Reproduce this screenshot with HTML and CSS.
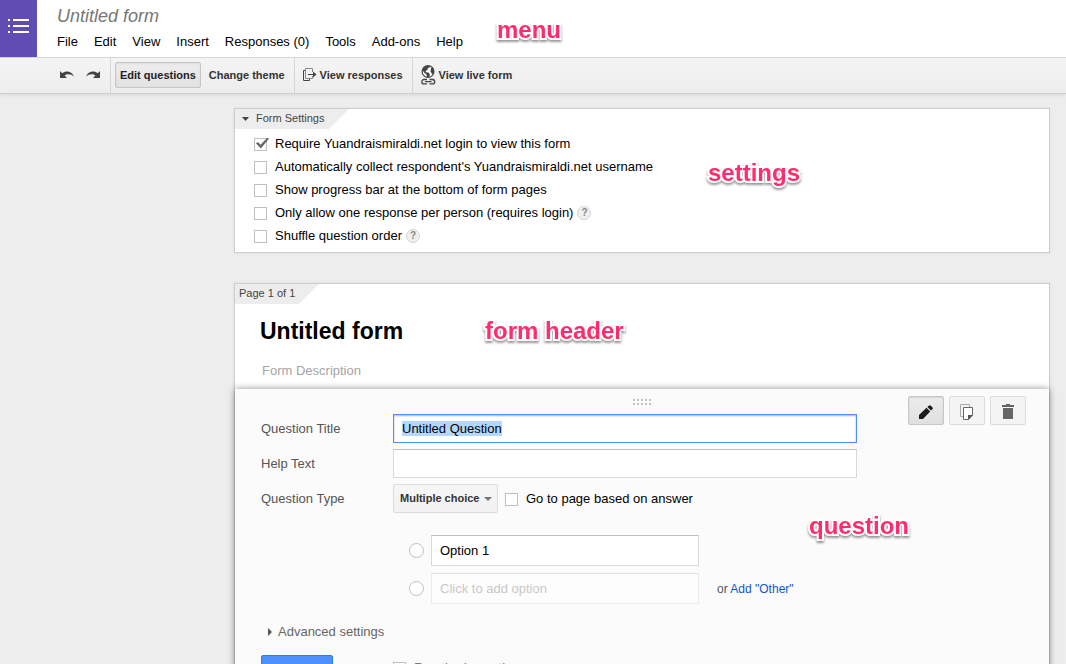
FILE: index.html
```html
<!DOCTYPE html>
<html lang="en">
<head>
<meta charset="utf-8">
<title>Untitled form</title>
<link rel="stylesheet" href="styles.css">
</head>
<body>
<header class="header">
  <a class="logo" href="#" aria-label="Forms home">
    <svg width="21" height="15" viewBox="0 0 21 15" fill="#fff" aria-hidden="true"><path d="M0 0h2v2H0zM5 0h16v2H5zM0 6h2v2H0zM5 6h16v2H5zM0 12h2v2H0zM5 12h16v2H5z"/></svg>
  </a>
  <div class="heading">
    <div class="doc-title">Untitled form</div>
    <nav class="menu">
      <a href="#">File</a><a href="#">Edit</a><a href="#">View</a><a href="#">Insert</a><a href="#">Responses (0)</a><a href="#">Tools</a><a href="#">Add-ons</a><a href="#">Help</a>
    </nav>
  </div>
  <span class="note note-menu">menu</span>
</header>

<div class="toolbar">
  <div class="group history">
    <button class="tool" type="button" aria-label="Undo"><svg width="16" height="10" viewBox="0 0 16 10" fill="#444" aria-hidden="true"><path d="M1 1v7h7L5.600 5.600C8 3.300 12 3.800 15 6.500 13 1.200 7 0 3.200 3.200z"/></svg></button>
    <button class="tool" type="button" aria-label="Redo"><svg width="16" height="10" viewBox="0 0 16 10" fill="#444" aria-hidden="true"><path d="M15 1v7H8l2.400-2.400C8 3.300 4 3.800 1 6.500 3 1.200 9 0 12.800 3.200z"/></svg></button>
  </div>
  <div class="group modes">
    <button class="tool selected" type="button">Edit questions</button>
    <button class="tool" type="button">Change theme</button>
  </div>
  <div class="group">
    <button class="tool" type="button"><svg width="14" height="14" viewBox="0 0 14 14" fill="none" stroke="#444" aria-hidden="true"><path d="M2.500 2.500h-2v10h6v-2"/><path d="M9.500 4V.5h-7v10h7V8" stroke="#888"/><path d="M5 6.500h7"/><path d="M10 3.500 13.500 6.500 10 9.500z" fill="#444" stroke="none"/></svg>View responses</button>
  </div>
  <div class="group">
    <button class="tool" type="button"><svg width="15" height="20" viewBox="0 0 15 20" aria-hidden="true"><circle cx="7" cy="6.500" r="5.900" fill="#fff" stroke="#444" stroke-width="1.200"/><path d="M1.300 5 3 2.200 6 .8l3 .2-.5 1.600-2 .7.3 1.500-2 1-.3 1.500 3 .3 1.500 2-1 2.700L6 12.300 5.500 9.500 3.500 8zM10 3l2-.4 1 3.400-.8 3.500-1.500-1L9.500 6.500z" fill="#444"/><path d="M6 14.500H3a2.200 2.200 0 0 0 0 4.400h3M8.500 14.500h3a2.200 2.200 0 0 1 0 4.400h-3M4 16.700h6.500" fill="none" stroke="#444" stroke-width="1.300"/></svg>View live form</button>
  </div>
</div>

<main class="workspace">
  <section class="card settings">
    <button class="tab" type="button"><svg width="7" height="4" viewBox="0 0 7 4" fill="#444" aria-hidden="true"><path d="M0 0h7L3.500 4z"/></svg>Form Settings</button>
    <div class="checks">
      <div class="check-row"><input class="check" type="checkbox" id="s1" checked><label for="s1">Require Yuandraismiraldi.net login to view this form</label></div>
      <div class="check-row"><input class="check" type="checkbox" id="s2"><label for="s2">Automatically collect respondent's Yuandraismiraldi.net username</label></div>
      <div class="check-row"><input class="check" type="checkbox" id="s3"><label for="s3">Show progress bar at the bottom of form pages</label></div>
      <div class="check-row"><input class="check" type="checkbox" id="s4"><label for="s4">Only allow one response per person (requires login)</label><button class="help" type="button">?</button></div>
      <div class="check-row"><input class="check" type="checkbox" id="s5"><label for="s5">Shuffle question order</label><button class="help" type="button">?</button></div>
    </div>
    <span class="note note-settings">settings</span>
  </section>

  <section class="card page">
    <div class="tab page-tab">Page 1 of 1</div>
    <div class="form-head">
      <h1>Untitled form</h1>
      <input class="description" type="text" placeholder="Form Description" aria-label="Form Description">
    </div>
    <span class="note note-head">form header</span>

    <form class="question">
      <svg class="handle" width="18" height="6" viewBox="0 0 18 6" fill="#c0c0c0" aria-hidden="true"><path d="M0 0h2v2H0zM4 0h2v2H4zM8 0h2v2H8zM12 0h2v2h-2zM16 0h2v2h-2zM0 4h2v2H0zM4 4h2v2H4zM8 4h2v2H8zM12 4h2v2h-2zM16 4h2v2h-2z"/></svg>
      <div class="fields">
        <div class="field"><label for="qt">Question Title</label><input class="text" id="qt" type="text" value="Untitled Question" autofocus></div>
        <div class="field"><label for="ht">Help Text</label><input class="text" id="ht" type="text"></div>
        <div class="field"><label for="ty">Question Type</label>
          <div class="select"><select id="ty"><option>Multiple choice</option></select><svg width="8" height="4" viewBox="0 0 8 4" fill="#777" aria-hidden="true"><path d="M0 0h8L4 4z"/></svg></div>
          <div class="check-row"><input class="check" type="checkbox" id="go"><label for="go">Go to page based on answer</label></div>
        </div>
        <div class="options">
          <div class="option"><input class="radio" type="radio" name="o" aria-label="Option 1 choice"><input class="text" type="text" value="Option 1" aria-label="Option 1 text"></div>
          <div class="option"><input class="radio" type="radio" name="o" aria-label="New choice"><input class="text ghost" type="text" placeholder="Click to add option" aria-label="New option text"><span class="other">or <a href="#">Add "Other"</a></span></div>
        </div>
        <button class="advanced" type="button"><svg width="4" height="8" viewBox="0 0 4 8" fill="#555" aria-hidden="true"><path d="M0 0v8l4-4z"/></svg>Advanced settings</button>
        <div class="finish"><button class="done" type="button" aria-label="Done"></button><div class="check-row"><input class="check" type="checkbox" id="rq"><label for="rq">Required question</label></div></div>
      </div>
      <div class="actions">
        <button class="action selected" type="button" aria-label="Edit"><svg width="14" height="14" viewBox="0 0 14 14" fill="#1c1c1c" aria-hidden="true"><path d="M0 14v-4l7.500-7.200 3.700 3.700L4 14zM8.400 2 9.800.7q1-1 2 0l1.500 1.500q1 1 0 2L12 5.600z"/></svg></button>
        <button class="action" type="button" aria-label="Duplicate"><svg width="14" height="16" viewBox="0 0 14 16" fill="none" aria-hidden="true"><path d="M3 12.500H.5V.5h9V3" stroke="#aaa"/><path d="M3.500 3.500h9v7.500l-4 4.500h-5z" fill="#fff" stroke="#666"/><path d="M8 16v-5h5z" fill="#555"/></svg></button>
        <button class="action" type="button" aria-label="Delete"><svg width="12" height="15" viewBox="0 0 12 15" fill="#666" aria-hidden="true"><path d="M0 1h4V0h4v1h4v2H0zM1 4h10v11H1z"/></svg></button>
      </div>
      <span class="note note-question">question</span>
    </form>
  </section>
</main>
<script src="app.js"></script>
</body>
</html>
```
FILE: styles.css
```css
* { box-sizing: border-box; }
html, body { height: 100%; }
body {
  margin: 0;
  overflow: hidden;
  background: #ededed;
  color: #000;
  font: 13px/16px Arial, "Liberation Sans", sans-serif;
}
button, input, select { font: inherit; color: inherit; margin: 0; }
button { border: 0; background: none; padding: 0; }
a { color: #15c; text-decoration: none; }
svg { display: block; flex: none; }

.header { position: relative; display: flex; background: #fff; }
.logo {
  width: 37px;
  min-height: 57px;
  display: flex;
  align-items: center;
  justify-content: center;
  padding-bottom: 4px;
  background: #5f4db3;
}
.heading { padding: 5px 20px 0; }
.doc-title { font-size: 18px; font-style: italic; line-height: 22px; color: #777; }
.menu { display: flex; gap: 16px; padding-top: 7px; }
.menu a { color: #000; }

.toolbar {
  display: flex;
  height: 37px;
  border-top: 1px solid #d6d6d6;
  border-bottom: 1px solid #cfcfcf;
  background: linear-gradient(#f4f4f4, #ededed);
  box-shadow: 0 1px 3px #00000018;
}
.group { display: flex; align-items: center; padding: 0 9px 2px 8px; }
.group + .group { border-left: 1px solid #d6d6d6; }
.history { gap: 10px; padding-left: 59px; }
.modes { gap: 3px; padding-left: 4px; padding-right: 4px; }
.tool { display: flex; align-items: center; gap: 3px; font-size: 11px; font-weight: bold; color: #333; white-space: nowrap; }
.modes .tool { height: 26px; padding: 0 4px; border: 1px solid transparent; border-radius: 2px; }
.modes .selected {
  border-color: #c6c6c6;
  background: linear-gradient(#ededed, #e2e2e2);
  box-shadow: inset 0 1px 2px #00000014;
  color: #222;
}

.workspace { padding: 14px 16px 0 234px; }
.card { position: relative; background: #fff; border: 1px solid #cdcdcd; box-shadow: 0 0 3px #00000012; }
.card + .card { margin-top: 30px; }
.tab {
  display: flex;
  width: 114px;
  height: 20px;
  align-items: center;
  gap: 7px;
  padding: 0 0 2px 7px;
  font-size: 11px;
  color: #444;
  background: #ededed;
  clip-path: polygon(0 0, 100% 0, calc(100% - 20px) 100%, 0 100%);
}
.tab svg { margin-top: 2px; }
.page-tab { width: 84px; padding-left: 4px; }

.checks { padding: 3px 19px 5px; }
.check-row { display: flex; align-items: center; height: 23px; }
.check {
  appearance: none;
  flex: none;
  width: 13px;
  height: 13px;
  margin: 1px 8px 0 0;
  border: 1px solid #c0c0c0;
  background: #fff;
  position: relative;
}
.check:checked::after {
  content: "";
  position: absolute;
  left: 1px;
  top: -1px;
  width: 13px;
  height: 11px;
  background: #666;
  clip-path: polygon(0 55%, 15% 40%, 35% 65%, 88% 0, 100% 8%, 38% 100%);
}
.help {
  width: 14px;
  height: 14px;
  margin-left: 4px;
  border: 1px solid #d4d4d4;
  border-radius: 50%;
  background: #f0f0f0;
  font-size: 10px;
  font-weight: bold;
  line-height: 12px;
  color: #888;
}

.form-head { padding: 12px 25px 9px; }
h1 { margin: 0; font-size: 23px; line-height: 30px; }
.description { display: block; width: 100%; margin-top: 14px; padding: 0 2px; border: 0; background: none; height: 20px; outline: 0; }
.description::placeholder { color: #a5a5a5; opacity: 1; }

.question {
  position: relative;
  display: flex;
  justify-content: space-between;
  padding: 7px 23px 24px 26px;
  background: #fbfbfb;
  box-shadow: 0 0 7px #00000070;
}
.handle { position: absolute; top: 10px; left: 50%; transform: translateX(-50%); }
.fields { flex: 1; padding-top: 18px; color: #555; }
.field { display: flex; align-items: center; margin-bottom: 6px; }
.field > label { width: 132px; flex: none; }
.field .check-row { margin-left: 7px; color: #000; }
.text {
  flex: 1;
  max-width: 464px;
  height: 29px;
  padding: 0 8px;
  border: 1px solid #d9d9d9;
  border-top-color: #c0c0c0;
  background: #fff;
  color: #000;
  outline: 0;
}
.text:focus { border-color: #4d90fe; box-shadow: inset 0 1px 2px #0000004d; }
.text::selection { background: #b3d7ff; color: #000; }
.select { position: relative; display: flex; align-items: center; }
.select select {
  appearance: none;
  width: 105px;
  height: 29px;
  padding: 0 6px 2px;
  border: 1px solid #dcdcdc;
  border-radius: 2px;
  background: linear-gradient(#f6f6f6, #f1f1f1);
  font-size: 11px;
  font-weight: bold;
  color: #333;
}
.select svg { position: absolute; right: 6px; top: 13px; pointer-events: none; }
.options { display: grid; gap: 7px; padding: 16px 0 0 148px; }
.option { display: flex; align-items: center; }
.option .text { height: 31px; flex: none; width: 268px; }
.option .ghost { border-color: #ebebeb; border-top-color: #dfdfdf; background: #fdfdfd; }
.ghost::placeholder { color: #c8c8c8; opacity: 1; }
.radio { appearance: none; width: 15px; height: 15px; margin-right: 7px; border: 1px solid #c0c0c0; border-radius: 50%; background: #fff; }
.other { margin-left: 18px; font-size: 12px; }
.advanced { display: flex; align-items: center; gap: 6px; margin: 20px 0 0 7px; color: #666; }
.finish { display: flex; align-items: flex-start; margin-top: 15px; }
.finish .check-row { margin: 1px 0 0 60px; color: #777; }
.done { width: 72px; height: 29px; border: 1px solid #3079ed; border-radius: 2px; background: #4d90fe; }

.actions { display: flex; gap: 5px; align-items: flex-start; }
.action {
  display: flex;
  width: 36px;
  height: 29px;
  align-items: center;
  justify-content: center;
  padding-top: 2px;
  border: 1px solid #dcdcdc;
  border-radius: 2px;
  background: #f4f4f4;
}
.action.selected { border-color: #c6c6c6; background: linear-gradient(#ececec, #e0e0e0); box-shadow: inset 0 1px 2px #0000001a; }

.note {
  position: absolute;
  color: #ff2d6b;
  font-size: 24px;
  font-weight: bold;
  line-height: 28px;
  white-space: nowrap;
  pointer-events: none;
  -webkit-text-stroke: 4px #fff;
  paint-order: stroke fill;
  filter: drop-shadow(0 2px 1px #00000066);
}
.note-menu { left: 497px; top: 16px; }
.note-settings { left: 473px; top: 50px; }
.note-head { left: 250px; top: 33px; }
.note-question { left: 574px; top: 123px; }
```
FILE: app.js
```js
const title = document.getElementById('qt');
title.focus();
title.select();
```
